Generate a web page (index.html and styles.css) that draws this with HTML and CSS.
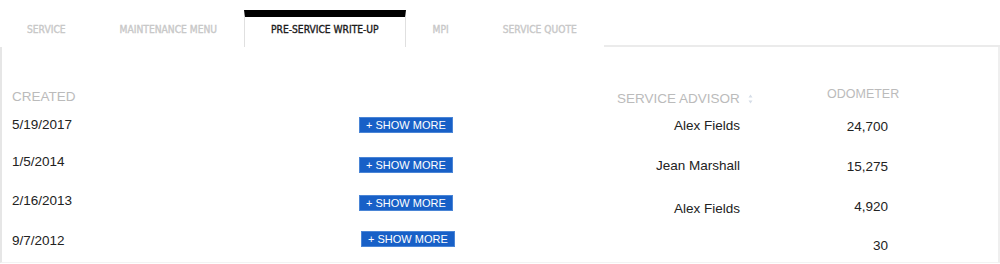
FILE: index.html
```html
<!DOCTYPE html>
<html lang="en">
<head>
<meta charset="utf-8">
<title>Pre-Service Write-Up</title>
<link rel="stylesheet" href="styles.css">
</head>
<body>
<div class="tabs">
  <div class="tab">SERVICE</div>
  <div class="tab">MAINTENANCE MENU</div>
  <div class="tab active">PRE-SERVICE WRITE-UP</div>
  <div class="tab">MPI</div>
  <div class="tab">SERVICE QUOTE</div>
  <div class="tabs-fill"></div>
</div>
<div class="panel">
  <div class="grid">
    <div class="th m42">CREATED</div>
    <div></div>
    <div class="th m44">SERVICE ADVISOR <svg class="sort" width="5" height="10" viewBox="0 0 5 10"><path d="M2.5 0.5 L4.5 3.5 H0.5 Z M2.5 9.5 L4.5 6.5 H0.5 Z" fill="#d6dde8"/></svg></div>
    <div class="th odo-h m40">ODOMETER</div>

    <div class="td m11">5/19/2017</div>
    <div class="m11"><button class="more">+ SHOW MORE</button></div>
    <div class="td adv m12">Alex Fields</div>
    <div class="td odo m13">24,700</div>

    <div class="td m9">1/5/2014</div>
    <div class="m12"><button class="more">+ SHOW MORE</button></div>
    <div class="td adv m13">Jean Marshall</div>
    <div class="td odo m14">15,275</div>

    <div class="td m9">2/16/2013</div>
    <div class="m11"><button class="more">+ SHOW MORE</button></div>
    <div class="td adv m17">Alex Fields</div>
    <div class="td odo m15">4,920</div>

    <div class="td m10">9/7/2012</div>
    <div class="m8"><button class="more shift">+ SHOW MORE</button></div>
    <div class="td adv"></div>
    <div class="td odo m15">30</div>
  </div>
</div>
</body>
</html>
```

FILE: styles.css
```css
html, body {
  margin: 0;
  padding: 0;
  background: #ffffff;
}
body {
  width: 1000px;
  height: 264px;
  overflow: hidden;
  font-family: "Liberation Sans", Arial, sans-serif;
}

/* Tabs */
.tabs {
  display: flex;
  align-items: stretch;
  padding-top: 10px;
  height: 37px;
}
.tab {
  box-sizing: border-box;
  height: 37px;
  padding: 7px 26px 0;
  border-top: 7px solid transparent;
  border-left: 1px solid transparent;
  border-right: 1px solid transparent;
  font-family: "DejaVu Sans Condensed", "Liberation Sans", sans-serif;
  font-weight: normal;
  font-size: 10.2px;
  line-height: 12px;
  -webkit-text-stroke: 0.35px currentColor;
  color: #c8c8c8;
  white-space: nowrap;
}
.tab.active {
  border-top-color: #000000;
  border-left-color: #e0e0e0;
  border-right-color: #e0e0e0;
  color: #1c1c1c;
}
.tabs-fill {
  flex: 1;
  border-bottom: 2px solid #ebebeb;
}

/* Panel */
.panel {
  box-sizing: border-box;
  height: 216px;
  border-left: 2px solid #e6e6e6;
  border-right: 2px solid #efefef;
  border-bottom: 1px solid #f3f3f3;
  padding-left: 10px;
}
.grid {
  display: grid;
  grid-template-columns: 347px 258px 140px 141px;
  grid-template-rows: 59px repeat(4, 39px);
  align-items: start;
}
.th {
  font-size: 13.5px;
  line-height: 15px;
  color: #bbbbbb;
  white-space: nowrap;
}
.sort {
  margin-left: 4px;
  vertical-align: -1px;
}
.odo-h {
  padding-left: 70px;
  font-size: 12.5px;
}
.td {
  font-size: 13.5px;
  line-height: 15px;
  color: #222222;
  white-space: nowrap;
}
.adv {
  text-align: right;
  padding-right: 17px;
}
.odo {
  text-align: right;
  padding-right: 10px;
}
.more {
  display: block;
  box-sizing: border-box;
  width: 94px;
  height: 16px;
  padding: 0 0 0 6px;
  margin: 0;
  border: 1px solid #4a85d6;
  background: #1860c7;
  color: #ffffff;
  font-family: "Liberation Sans", Arial, sans-serif;
  font-size: 11px;
  line-height: 14px;
  text-align: left;
  cursor: pointer;
}
.more.shift {
  margin-left: 2px;
}

/* vertical placement within rows */
.m8 { margin-top: 8px; }
.m9 { margin-top: 9px; }
.m10 { margin-top: 10px; }
.m11 { margin-top: 11px; }
.m12 { margin-top: 12px; }
.m13 { margin-top: 13px; }
.m14 { margin-top: 14px; }
.m15 { margin-top: 15px; }
.m17 { margin-top: 17px; }
.m40 { margin-top: 40px; }
.m42 { margin-top: 42px; }
.m44 { margin-top: 44px; }
```
